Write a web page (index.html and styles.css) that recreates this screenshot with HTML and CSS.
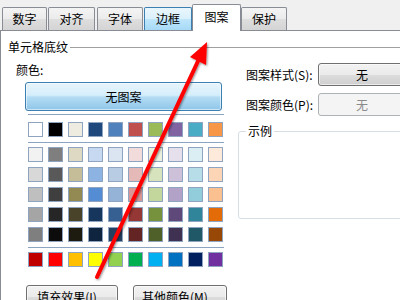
FILE: index.html
```html
<!DOCTYPE html>
<html lang="zh-CN">
<head>
<meta charset="utf-8">
<title>设置单元格格式 - 图案</title>
<link rel="stylesheet" href="styles.css">
</head>
<body>
<div class="window">
  <div class="tabs">
    <div class="tab t1">数字</div>
    <div class="tab t2">对齐</div>
    <div class="tab t3">字体</div>
    <div class="tab t4 hot">边框</div>
    <div class="tab t5 active">图案</div>
    <div class="tab t6">保护</div>
  </div>
  <div class="panel">
    <div class="group-head"><span class="group-title">单元格底纹</span><i class="rule"></i></div>
    <div class="body">
      <div class="left">
        <div class="label">颜色:</div>
        <div class="btn-blue">无图案</div>
        <div class="sep"></div>
        <div class="grid">
          <i class="sw" style="background:#ffffff"></i><i class="sw" style="background:#000000"></i><i class="sw" style="background:#eeece1"></i><i class="sw" style="background:#1f497d"></i><i class="sw" style="background:#4f81bd"></i><i class="sw" style="background:#c0504d"></i><i class="sw" style="background:#9bbb59"></i><i class="sw" style="background:#8064a2"></i><i class="sw" style="background:#4bacc6"></i><i class="sw" style="background:#f79646"></i>
        </div>
        <div class="sep s2"></div>
        <div class="grid shades">
          <i class="sw" style="background:#f2f2f2"></i><i class="sw" style="background:#7f7f7f"></i><i class="sw" style="background:#ddd9c3"></i><i class="sw" style="background:#c6d9f0"></i><i class="sw" style="background:#dbe5f1"></i><i class="sw" style="background:#f2dcdb"></i><i class="sw" style="background:#ebf1dd"></i><i class="sw" style="background:#e5e0ec"></i><i class="sw" style="background:#dbeef3"></i><i class="sw" style="background:#fdeada"></i>
          <i class="sw" style="background:#d8d8d8"></i><i class="sw" style="background:#595959"></i><i class="sw" style="background:#c4bd97"></i><i class="sw" style="background:#8db3e2"></i><i class="sw" style="background:#b8cce4"></i><i class="sw" style="background:#e5b9b7"></i><i class="sw" style="background:#d7e3bc"></i><i class="sw" style="background:#ccc1d9"></i><i class="sw" style="background:#b7dde8"></i><i class="sw" style="background:#fbd5b5"></i>
          <i class="sw" style="background:#bfbfbf"></i><i class="sw" style="background:#3f3f3f"></i><i class="sw" style="background:#938953"></i><i class="sw" style="background:#548dd4"></i><i class="sw" style="background:#95b3d7"></i><i class="sw" style="background:#d99694"></i><i class="sw" style="background:#c3d69b"></i><i class="sw" style="background:#b2a2c7"></i><i class="sw" style="background:#92cddc"></i><i class="sw" style="background:#fac08f"></i>
          <i class="sw" style="background:#a5a5a5"></i><i class="sw" style="background:#262626"></i><i class="sw" style="background:#494429"></i><i class="sw" style="background:#17365d"></i><i class="sw" style="background:#366092"></i><i class="sw" style="background:#953734"></i><i class="sw" style="background:#76923c"></i><i class="sw" style="background:#5f497a"></i><i class="sw" style="background:#31859b"></i><i class="sw" style="background:#e36c09"></i>
          <i class="sw" style="background:#7f7f7f"></i><i class="sw" style="background:#0c0c0c"></i><i class="sw" style="background:#1d1b10"></i><i class="sw" style="background:#0f243e"></i><i class="sw" style="background:#244061"></i><i class="sw" style="background:#632423"></i><i class="sw" style="background:#4f6128"></i><i class="sw" style="background:#3f3151"></i><i class="sw" style="background:#205867"></i><i class="sw" style="background:#974806"></i>
        </div>
        <div class="sep s2"></div>
        <div class="grid std">
          <i class="sw" style="background:#c00000"></i><i class="sw" style="background:#ff0000"></i><i class="sw" style="background:#ffc000"></i><i class="sw" style="background:#ffff00"></i><i class="sw" style="background:#92d050"></i><i class="sw" style="background:#00b050"></i><i class="sw" style="background:#00b0f0"></i><i class="sw" style="background:#0070c0"></i><i class="sw" style="background:#002060"></i><i class="sw" style="background:#7030a0"></i>
        </div>
        <div class="btns">
          <div class="btn b1">填充效果(I)...</div>
          <div class="btn b2">其他颜色(M)...</div>
        </div>
      </div>
      <div class="right">
        <div class="field r1">
          <span class="flabel">图案样式(S):</span>
          <div class="btn combo">无</div>
        </div>
        <div class="field r2">
          <span class="flabel">图案颜色(P):</span>
          <div class="combo disabled">无</div>
        </div>
        <fieldset class="sample">
          <legend>示例</legend>
          <div class="sample-area"></div>
        </fieldset>
      </div>
    </div>
  </div>
  <svg class="arrow" width="400" height="300" viewBox="0 0 400 300">
    <defs>
      <filter id="sh" x="-20%" y="-20%" width="140%" height="140%">
        <feDropShadow dx="1" dy="1" stdDeviation="0.8" flood-color="#000" flood-opacity="0.45"/>
      </filter>
    </defs>
    <g filter="url(#sh)">
      <line x1="97" y1="277" x2="199" y2="59" stroke="#ff0000" stroke-width="4" stroke-linecap="round"/>
      <polygon points="207,42 190,57 206,65" fill="#ff0000"/>
    </g>
  </svg>
</div>
</body>
</html>
```
FILE: styles.css
```css
* { box-sizing: border-box; }
html, body { margin: 0; padding: 0; }
body {
  width: 400px;
  height: 300px;
  overflow: hidden;
  font-family: "Noto Sans CJK SC", "Noto Sans", "Liberation Sans", sans-serif;
  font-size: 12px;
  color: #000;
  background: #f0f0f0;
}
.window {
  position: relative;
  width: 400px;
  height: 300px;
  overflow: hidden;
}
.tabs {
  display: flex;
  align-items: flex-end;
  height: 30px;
  padding-left: 2px;
}
.tab {
  height: 23px;
  border: 1px solid #898c95;
  border-bottom: none;
  border-radius: 2px 2px 0 0;
  background: linear-gradient(#f4f4f4 0%, #ebebeb 50%, #dedede 51%, #d4d4d4 100%);
  line-height: 21px;
  text-align: center;
  white-space: nowrap;
}
.t1 { width: 45px; margin-right: 1px; }
.t2 { width: 47px; margin-right: 2px; }
.t3 { width: 46px; margin-right: 1px; }
.t4 { width: 48px; }
.t5 { width: 49px; }
.t6 { width: 46px; }
.tab.hot {
  border-color: #3c7fb1;
  background: linear-gradient(#eaf6fd 0%, #d9f0fc 50%, #bee6fd 51%, #a7d9f5 100%);
}
.tab.active {
  position: relative;
  z-index: 2;
  height: 27px;
  margin-bottom: -1px;
  background: #fff;
  line-height: 24px;
}
.panel {
  height: 270px;
  background: #fff;
  border-top: 1px solid #898c95;
  border-left: 1px solid #898c95;
}
.group-head {
  display: flex;
  align-items: center;
  height: 16px;
  margin-top: 8px;
  padding-left: 7px;
}
.group-title { line-height: 16px; white-space: nowrap; }
.rule {
  flex: 1;
  height: 1px;
  margin-left: 2px;
  background: #a0a0a0;
}
.body { display: flex; }
.left {
  width: 237px;
  flex: none;
  padding-left: 15px;
}
.label {
  margin-top: 7px;
  line-height: 16px;
}
.btn-blue {
  width: 197px;
  height: 29px;
  margin: 4px 0 0 9px;
  border: 1px solid #3c7fb1;
  border-radius: 3px;
  background: linear-gradient(#e6f4fc 0%, #d6eefb 45%, #b4dcf4 52%, #8fc6e9 100%);
  box-shadow: inset 0 0 0 1px rgba(255,255,255,0.55);
  text-align: center;
  line-height: 27px;
}
.sep {
  width: 196px;
  height: 1px;
  margin: 3px 0 0 12px;
  background: #8aa4c2;
}
.sep.s2 { margin-top: 5px; }
.grid {
  display: grid;
  grid-template-columns: repeat(10, 15px);
  grid-auto-rows: 15px;
  column-gap: 5px;
  row-gap: 5px;
  margin: 7px 0 0 12px;
}
.grid.shades, .grid.std { margin-top: 4px; }
.sw {
  display: block;
  width: 15px;
  height: 15px;
  border: 1px solid #8ea4c0;
}
.btns {
  display: flex;
  margin: 18px 0 0 10px;
  gap: 15px;
}
.btn {
  height: 23px;
  border: 1px solid #707070;
  border-radius: 3px;
  background: linear-gradient(#f2f2f2 0%, #ebebeb 50%, #dddddd 51%, #cfcfcf 100%);
  box-shadow: inset 0 0 0 1px rgba(255,255,255,0.6);
  text-align: center;
  line-height: 21px;
  white-space: nowrap;
}
.b1 { width: 92px; }
.b2 { width: 94px; }
.right {
  flex: 1;
  min-width: 0;
}
.field {
  display: flex;
  align-items: center;
  height: 23px;
  padding-left: 8px;
  margin-top: 8px;
}
.field.r2 { margin-top: 7px; }
.flabel {
  width: 72px;
  flex: none;
  white-space: nowrap;
}
.combo {
  width: 88px;
  height: 23px;
  flex: none;
  text-align: center;
  line-height: 21px;
}
.combo.disabled {
  border: 1px solid #adb2b5;
  border-radius: 3px;
  background: #f4f4f4;
  color: #8a8a8a;
}
.sample {
  margin: 7px -12px 0 0;
  padding: 0;
  border: 1px solid #d5dfe5;
  border-radius: 3px;
  min-width: 0;
}
.sample legend {
  margin-left: 7px;
  padding: 0 2px;
  line-height: 16px;
}
.sample-area { height: 79px; }
.arrow {
  position: absolute;
  left: 0;
  top: 0;
  pointer-events: none;
}
```
